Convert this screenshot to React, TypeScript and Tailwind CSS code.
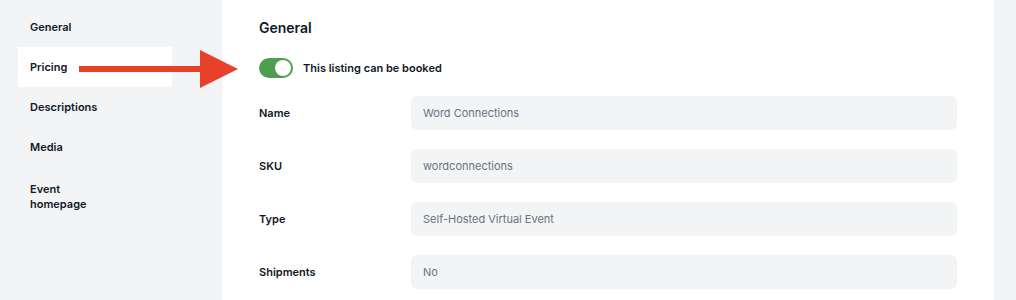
import { useState } from "react";

const navItems = ["General", "Pricing", "Descriptions", "Media"];

const fields = [
  { label: "Name", value: "Word Connections" },
  { label: "SKU", value: "wordconnections" },
  { label: "Type", value: "Self-Hosted Virtual Event" },
  { label: "Shipments", value: "No" },
];

const Toggle = ({ on }: { on: boolean }) => (
  <div
    className={`w-[34px] h-[20px] rounded-full p-[2px] flex items-center ${
      on ? "bg-[#4f9e4f] justify-end" : "bg-gray-300 justify-start"
    }`}
  >
    <span className="w-[16px] h-[16px] rounded-full bg-white" />
  </div>
);

const Arrow = () => (
  <svg
    className="absolute left-[79px] top-[50px]"
    width="160"
    height="40"
    viewBox="0 0 160 40"
  >
    <rect x="0" y="16" width="124" height="6" fill="#e8412a" />
    <polygon points="121,0 159,19 121,38" fill="#e8412a" />
  </svg>
);

export default function App() {
  const [active] = useState("Pricing");
  const [bookable] = useState(true);

  return (
    <div
      className="relative flex w-[1016px] h-[300px] bg-[#f3f4f6] text-[#111827] overflow-hidden"
      style={{ fontFamily: "Inter, 'Noto Sans', sans-serif" }}
    >
      <aside className="w-[222px] shrink-0 pt-[7px] pl-[18px] pr-[50px]">
        {navItems.map((item) => (
          <div
            key={item}
            className={`px-3 py-3 text-[11px] leading-4 font-semibold ${
              item === active ? "bg-white" : ""
            }`}
          >
            {item}
          </div>
        ))}
        <div className="mt-[3px] px-3 py-3 text-[11px] leading-[15px] font-semibold">
          Event
          <br />
          homepage
        </div>
      </aside>

      <main className="w-[772px] shrink-0 bg-white px-[37px] pt-[19px]">
        <h2 className="text-[14px] leading-[18px] font-semibold">General</h2>

        <div className="mt-[21px] flex items-center gap-[10px]">
          <Toggle on={bookable} />
          <span className="text-[11px] font-semibold">
            This listing can be booked
          </span>
        </div>

        <div className="mt-[18px] flex flex-col gap-[19px]">
          {fields.map((f) => (
            <div key={f.label} className="grid grid-cols-[152px_1fr] items-center">
              <span className="text-[11px] font-semibold">{f.label}</span>
              <div className="h-[34px] rounded-md bg-[#f3f4f6] px-3 flex items-center text-[11px] text-[#6b7280]">
                {f.value}
              </div>
            </div>
          ))}
        </div>
      </main>

      <Arrow />
    </div>
  );
}
